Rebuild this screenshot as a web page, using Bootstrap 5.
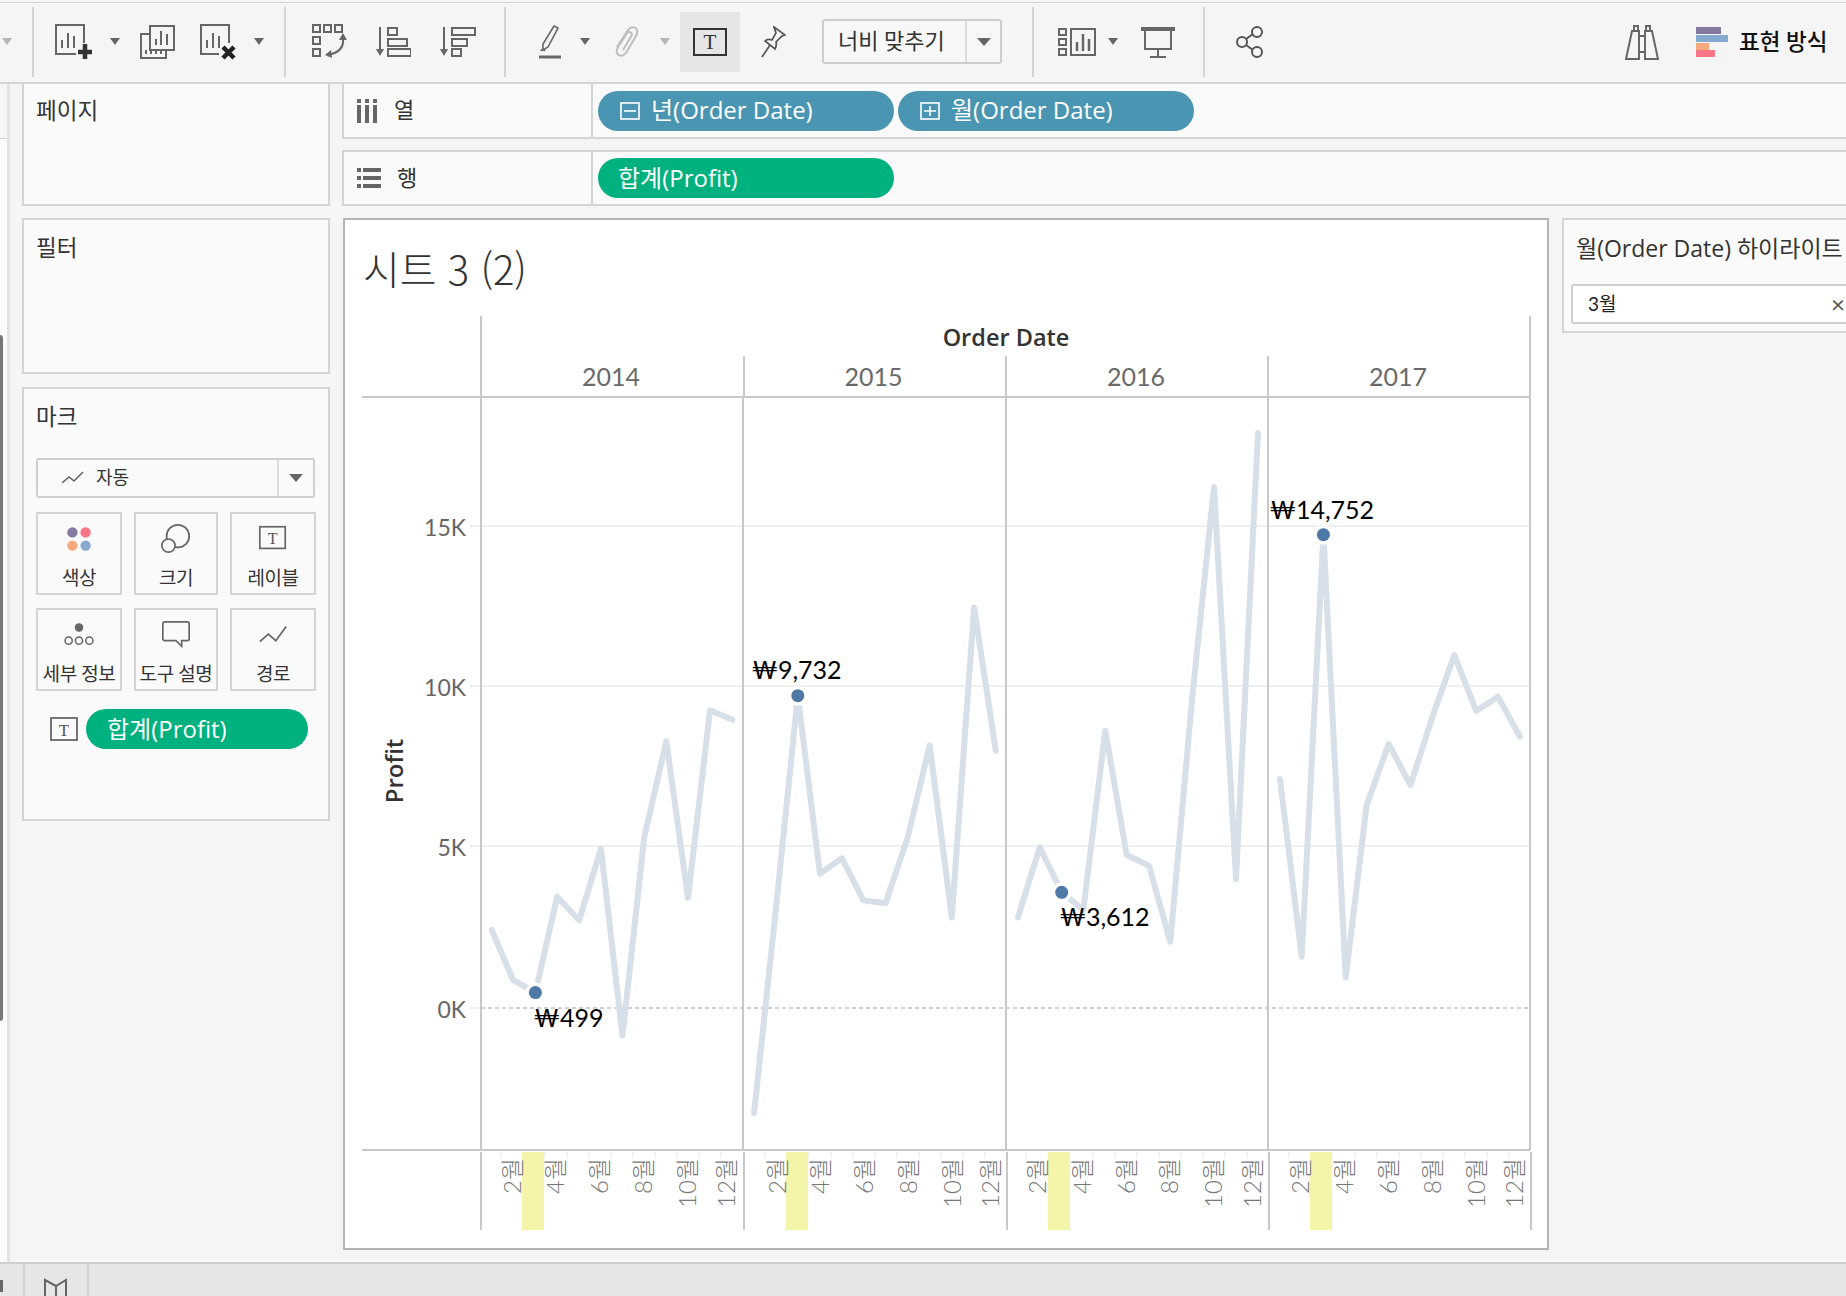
<!doctype html>
<html lang="ko">
<head>
<meta charset="utf-8">
<title>시트 3 (2)</title>
<link href="https://cdn.jsdelivr.net/npm/bootstrap@5.3.0/dist/css/bootstrap.min.css" rel="stylesheet">
<style>
:root{--line:#d4d4d4;--ink:#333;--icon:#666}
html,body{height:100%}
body{width:1846px;height:1296px;overflow:hidden;background:#f5f5f5;color:var(--ink);font-family:Lato,"Noto Sans CJK KR",sans-serif;font-size:21px;line-height:1.2}
.page-top{height:3px;border-bottom:1px solid var(--line);margin-top:0}
.toolbar-strip{height:81px;border-bottom:2px solid var(--line);padding-bottom:2px}
.toolbar-strip svg{display:block;flex:none}
.tb-sep{width:2px;height:70px;background:#d4d4d4;flex:none}
.caret-dn{width:0;height:0;border-left:5px solid transparent;border-right:5px solid transparent;border-top:7px solid var(--icon);flex:none}
.caret-off{border-top-color:#b5b5b5}
.caret-lg{border-left-width:7px;border-right-width:7px;border-top-width:8px}
.s10{margin-left:10px}.s11{margin-left:11px}.s12{margin-left:12px}.s18{margin-left:18px}.s19{margin-left:19px}.s20{margin-left:20px}.s21{margin-left:21px}.s23{margin-left:23px}.s24{margin-left:24px}.s25{margin-left:25px}.s26{margin-left:26px}.s28{margin-left:28px}.s29{margin-left:29px}.s30{margin-left:30px}.s31{margin-left:31px}.s33{margin-left:33px}.s36{margin-left:36px}.s37{margin-left:37px}.s2{margin-left:2px}.s361{margin-left:361px}
.t-active{width:60px;height:60px;background:#e6e6e6;flex:none}
.fit-select{width:180px;height:45px;border:2px solid #cdcdcd;border-radius:3px;flex:none;background:#f7f7f7}
.fit-label{width:141px;padding-left:14px;font-size:22px;color:#333;white-space:nowrap}
.fit-arrow{flex:1;height:100%;border-left:2px solid #dcdcdc}
.showme-text{font-size:22.500px;color:#111;white-space:nowrap;font-weight:500}
.work-row{height:1178px}
.left-strip{width:10px;flex:none;border-right:3px solid #e3e3e3;background:#fbfbfb}
.strip-head{height:55px;border-bottom:1px solid var(--line);background:#f6f6f6}
.strip-thumb{width:3px;height:686px;margin-top:196px;background:#777;border-radius:0 3px 3px 0}
.side-col{width:308px;margin-left:12px;flex:none}
.side-box{background:#fafafa;border:2px solid var(--line);padding:16px 12px 0 12px}
.box-pages{height:122px;border-top:0;padding-top:15px;margin-bottom:12px}
.box-filter{height:156px;margin-bottom:13px}
.box-marks{height:434px}
.box-label{font-size:22.500px;line-height:24px;color:#333}
.mark-select{height:40px;width:279px;margin-top:29px;border:2px solid #cfcfcf;border-radius:3px}
.mark-main{width:241px;padding-left:24px;font-size:18px;border-right:2px solid #dcdcdc;height:100%;gap:12px}
.mark-arrow{flex:1}
.mark-grid{display:grid;grid-template-columns:86px 84px 86px;column-gap:12px;row-gap:13px;width:280px;margin-top:14px}
.mark-tile{height:83px;border:2px solid var(--line);padding-top:9px;font-size:19px;line-height:22px;color:#333;white-space:nowrap;letter-spacing:-.4px}
.mark-tile svg{height:32px;width:32px;display:block;margin-bottom:12px}
.pill-line{margin-top:18px;margin-left:14px;gap:8px}
.data-pill{height:40px;border-radius:20px;color:#fff;font-family:"Open Sans","Noto Sans CJK KR",sans-serif;font-size:24px;white-space:nowrap;width:296px;flex:none}
.pill-blue{background:#4a96b2}
.pill-green{background:#00b180}
.pill-short{width:222px;padding-left:21px}
.main-col{margin-left:12px;width:1504px;flex:none}
.shelf-row{height:55px;background:#fafafa;border-left:2px solid var(--line);border-bottom:2px solid var(--line);width:1504px}
.shelf-row+.shelf-row{border-top:2px solid var(--line);margin-top:11px;height:56px}
.shelf-name{width:249px;height:100%;border-right:2px solid var(--line);padding-left:13px;gap:16px;font-size:22px;flex:none}
.shelf-pills{padding-left:5px;gap:4px}
.shelf-pills .data-pill{gap:11px;padding-left:22px}
.shelf-pills .pill-tall{padding-left:20px}
.view-row{margin-top:12px;gap:13px;margin-left:1px}
.view-card{width:1206px;height:1032px;background:#fff;border:2px solid #b4b4b4;flex:none}
.view-title{height:90px;padding:25px 0 0 18px;font-size:40px;font-weight:300;line-height:46px;color:#333;font-family:"Noto Sans CJK KR",sans-serif}
.view-card svg{display:block}
.ax-txt{font-family:Lato,"Noto Sans CJK KR",sans-serif}
.ax-num{font-size:23px;fill:#666}
.ax-head{font-size:23.500px;fill:#333;font-weight:600;font-family:"Open Sans","Noto Sans CJK KR",sans-serif}
.ax-vert{font-size:24px}
.ax-year{font-size:25px;fill:#6a6a6a}
.ax-month{font-size:24px;fill:#777;font-weight:300}
.val-lab{font-size:25px;fill:#000}
.hl-panel{width:400px;height:115px;background:#fafafa;border:2px solid var(--line);padding:14px 0 0 12px;flex:none}
.hl-title{font-family:"Open Sans","Noto Sans CJK KR",sans-serif;font-size:23px;line-height:28px;white-space:nowrap;color:#333}
.hl-input{height:40px;width:290px;margin-top:22px;margin-left:-5px;background:#fff;border:2px solid #cfcfcf;border-radius:3px;padding-left:15px;font-size:19px;color:#222;justify-content:space-between}
.hl-x{margin-right:14px;color:#555;font-size:24px;line-height:1}
.bottom-bar{height:34px;background:#e6e6e6;border-top:2px solid #cfcfcf}
.tab-cell{height:100%;border-right:2px solid #d2d2d2;flex:none}
.tab-a{width:25px;padding-top:16px}
.tab-a svg{display:block}
.tab-b{width:64px}
.tab-b svg{margin:14px 0 0 19px;display:block}
</style>
</head>
<body>
<div class="page-top"></div>

<div class="toolbar-strip d-flex align-items-center">
  <span class="caret-dn caret-off s2"></span>
  <span class="tb-sep s20"></span>
  <svg class="s21" width="37" height="36" viewBox="0 0 37 36" fill="none" stroke="#666"><path stroke-width="2" d="M29 19V1H1v29h20"/><path stroke-width="2" d="M7 24v-8M13 24V9M19 24V12"/><path stroke="#333" stroke-width="4.500" d="M30 20v15M23 28h14"/></svg>
  <span class="caret-dn s18"></span>
  <svg class="s20" width="35" height="34" viewBox="0 0 35 34" fill="none" stroke="#666" stroke-width="2"><rect x="10" y="1" width="24" height="24"/><path d="M16 20v-6M21 20V6M27 20V9"/><path d="M10 9H1v24h25v-8"/><path d="M6 29v-4M11 29v-4M16 29v-4M21 29v-4"/></svg>
  <svg class="s25" width="36" height="36" viewBox="0 0 36 36" fill="none" stroke="#666" stroke-width="2"><path d="M29 19V1H1v29h18"/><path d="M7 24v-8M13 24V9M19 24V12"/><path stroke="#222" stroke-width="4.500" d="M23 23l11 11M34 23L23 34"/></svg>
  <span class="caret-dn s18"></span>
  <span class="tb-sep s20"></span>
  <svg class="s26" width="35" height="36" viewBox="0 0 35 36" fill="none" stroke="#666" stroke-width="2"><rect x="1" y="1" width="7" height="7"/><rect x="12" y="1" width="7" height="7"/><rect x="23" y="1" width="7" height="7"/><rect x="1" y="13" width="7" height="7"/><rect x="1" y="25" width="7" height="7"/><path d="M31 14c1 9-4 15-15 17"/><path fill="#666" stroke="none" d="M27 16l4-7 4 7zM13 31l6-5 1 8z"/></svg>
  <svg class="s29" width="35" height="30" viewBox="0 0 35 30" fill="none" stroke="#666" stroke-width="2"><path d="M4 0v24"/><path fill="#666" stroke="none" d="M0 22h8l-4 7z"/><rect x="12" y="1" width="9" height="7"/><rect x="12" y="12" width="19" height="7"/><rect x="12" y="22" width="23" height="7"/></svg>
  <svg class="s29" width="36" height="30" viewBox="0 0 36 30" fill="none" stroke="#666" stroke-width="2"><path d="M4 0v24"/><path fill="#666" stroke="none" d="M0 22h8l-4 7z"/><rect x="12" y="1" width="23" height="7"/><rect x="12" y="12" width="15" height="7"/><rect x="12" y="22" width="9" height="7"/></svg>
  <span class="tb-sep s28"></span>
  <svg class="s33" width="22" height="34" viewBox="0 0 22 34" fill="none" stroke="#666" stroke-width="1.600"><path d="M15 1l4 2-10 19-5 3 0-6z"/><path d="M2 26l1-2M6 26l-1-1"/><path stroke-width="3" d="M0 32h22"/></svg>
  <span class="caret-dn s19"></span>
  <svg class="s25" width="24" height="32" viewBox="0 0 24 32" fill="none" stroke="#bdbdbd" stroke-width="2"><path d="M2 21L13 4c3-4 8-3 9 0 1 2 0 4-1 6L11 27c-3 4-8 3-9 0-1-2 0-4 1-6l9-14c2-2 5-1 5 2l-9 15"/></svg>
  <span class="caret-dn caret-off s21"></span>
  <div class="t-active s10 d-flex align-items-center justify-content-center">
    <svg width="34" height="28" viewBox="0 0 34 28" fill="none"><rect x="1" y="1" width="32" height="26" stroke="#333" stroke-width="2"/><text x="17" y="21" text-anchor="middle" font-family="Liberation Serif" font-size="21" fill="#333">T</text></svg>
  </div>
  <svg class="s20" width="26" height="32" viewBox="0 0 26 32" fill="none" stroke="#555" stroke-width="1.700"><path d="M14 1l11 8-3 1-6 6c1 3 0 5-1 7L5 15c2-2 4-2 7-1l4-7z"/><path d="M10 19L2 31"/></svg>
  <div class="fit-select s36 d-flex align-items-center">
    <span class="fit-label">너비 맞추기</span>
    <span class="fit-arrow d-flex align-items-center justify-content-center"><span class="caret-dn caret-lg"></span></span>
  </div>
  <span class="tb-sep s30"></span>
  <svg class="s24" width="38" height="28" viewBox="0 0 38 28" fill="none" stroke="#666" stroke-width="2"><rect x="1" y="1" width="7" height="6"/><rect x="1" y="11" width="7" height="6"/><rect x="1" y="21" width="7" height="6"/><rect x="13" y="1" width="24" height="26"/><path stroke-width="2.500" d="M19 23v-9M25 23V6M31 23V11"/></svg>
  <span class="caret-dn s12"></span>
  <svg class="s23" width="34" height="32" viewBox="0 0 34 32" fill="none" stroke="#666" stroke-width="2"><path stroke-width="4" d="M0 3h34"/><path d="M4 4v19h26V4M17 23v7M9 31h16"/></svg>
  <span class="tb-sep s28"></span>
  <svg class="s31" width="28" height="32" viewBox="0 0 28 32" fill="none" stroke="#555" stroke-width="2"><circle cx="6" cy="16" r="5"/><circle cx="21" cy="6" r="5"/><circle cx="21" cy="26" r="5"/><path d="M10 13l7-5M10 19l7 5"/></svg>
  <svg class="s361" width="34" height="36" viewBox="0 0 34 36" fill="none" stroke="#666" stroke-width="2"><path d="M9 7V2h4v5M21 7V2h4v5M7 7h7v28H1zM20 7h7l6 28H20zM14 12h6M14 28h6"/></svg>
  <svg class="s37" width="32" height="30" viewBox="0 0 32 30"><rect width="25" height="7" fill="#867aa0"/><rect y="8" width="32" height="7" fill="#86a9d0"/><rect y="16" width="13" height="7" fill="#f4a97e"/><rect y="23" width="19" height="7" fill="#f87487"/></svg>
  <span class="showme-text s11">표현 방식</span>
</div>

<div class="work-row d-flex">
  <div class="left-strip d-flex flex-column">
    <div class="strip-head"></div>
    <div class="strip-thumb"></div>
  </div>

  <div class="side-col">
    <div class="side-box box-pages"><div class="box-label">페이지</div></div>
    <div class="side-box box-filter"><div class="box-label">필터</div></div>
    <div class="side-box box-marks">
      <div class="box-label">마크</div>
      <div class="mark-select d-flex align-items-center">
        <div class="mark-main d-flex align-items-center">
          <svg width="22" height="14" viewBox="0 0 22 14" fill="none" stroke="#666" stroke-width="1.600"><path d="M0 12l7-6 5 4 9-9"/></svg>
          <span>자동</span>
        </div>
        <div class="mark-arrow d-flex justify-content-center"><span class="caret-dn caret-lg"></span></div>
      </div>
      <div class="mark-grid">
        <div class="mark-tile d-flex flex-column align-items-center">
          <svg viewBox="0 0 34 34"><circle cx="10" cy="10" r="5.500" fill="#867aa0"/><circle cx="24" cy="10" r="5.500" fill="#f87487"/><circle cx="10" cy="24" r="5.500" fill="#f4a97e"/><circle cx="24" cy="24" r="5.500" fill="#86a9d0"/></svg>
          <span>색상</span>
        </div>
        <div class="mark-tile d-flex flex-column align-items-center">
          <svg viewBox="0 0 34 34" fill="none" stroke="#666" stroke-width="1.800"><circle cx="19" cy="14" r="12"/><circle cx="9" cy="24" r="7" fill="#fafafa"/></svg>
          <span>크기</span>
        </div>
        <div class="mark-tile d-flex flex-column align-items-center">
          <svg viewBox="0 0 34 34" fill="none"><rect x="3" y="4" width="27" height="23" stroke="#666" stroke-width="1.800"/><text x="16.500" y="22" text-anchor="middle" font-family="Liberation Serif" font-size="17" fill="#555">T</text></svg>
          <span>레이블</span>
        </div>
        <div class="mark-tile d-flex flex-column align-items-center">
          <svg viewBox="0 0 34 34" fill="none" stroke="#666" stroke-width="1.600"><circle cx="17" cy="9" r="4.500" fill="#666" stroke="none"/><circle cx="6" cy="23" r="3.800"/><circle cx="17" cy="23" r="3.800"/><circle cx="28" cy="23" r="3.800"/></svg>
          <span>세부 정보</span>
        </div>
        <div class="mark-tile d-flex flex-column align-items-center">
          <svg viewBox="0 0 34 34" fill="none" stroke="#666" stroke-width="1.800"><path d="M5 3h24a2 2 0 0 1 2 2v16a2 2 0 0 1-2 2h-6v6l-6-6H5a2 2 0 0 1-2-2V5a2 2 0 0 1 2-2z"/></svg>
          <span>도구 설명</span>
        </div>
        <div class="mark-tile d-flex flex-column align-items-center">
          <svg viewBox="0 0 34 34" fill="none" stroke="#666" stroke-width="1.800"><path d="M3 24l9-8 8 7L31 8"/></svg>
          <span>경로</span>
        </div>
      </div>
      <div class="pill-line d-flex align-items-center">
        <svg width="28" height="24" viewBox="0 0 28 24" fill="none"><rect x="1" y="1" width="26" height="22" stroke="#666" stroke-width="1.800"/><text x="14" y="18.500" text-anchor="middle" font-family="Liberation Serif" font-size="17" fill="#555">T</text></svg>
        <div class="data-pill pill-green pill-short d-flex align-items-center">합계(Profit)</div>
      </div>
    </div>
  </div>

  <div class="main-col">
    <div class="shelf-row d-flex">
      <div class="shelf-name d-flex align-items-center">
        <svg width="21" height="24" viewBox="0 0 21 24" fill="#666"><rect width="4" height="4"/><rect y="6" width="4" height="18"/><rect x="8" width="4" height="4"/><rect x="8" y="6" width="4" height="18"/><rect x="16" width="4" height="4"/><rect x="16" y="6" width="4" height="18"/></svg>
        <span>열</span>
      </div>
      <div class="shelf-pills d-flex align-items-center">
        <div class="data-pill pill-blue d-flex align-items-center">
          <svg width="20" height="18" viewBox="0 0 20 18" fill="none" stroke="#fff" stroke-width="1.600"><rect x="1" y="1" width="18" height="16"/><path d="M4 9h12"/></svg>
          <span>년(Order Date)</span>
        </div>
        <div class="data-pill pill-blue d-flex align-items-center">
          <svg width="20" height="18" viewBox="0 0 20 18" fill="none" stroke="#fff" stroke-width="1.600"><rect x="1" y="1" width="18" height="16"/><path d="M4 9h12M10 4v10"/></svg>
          <span>월(Order Date)</span>
        </div>
      </div>
    </div>
    <div class="shelf-row d-flex">
      <div class="shelf-name d-flex align-items-center">
        <svg width="24" height="20" viewBox="0 0 24 20" fill="#666"><rect y="0" width="4" height="4"/><rect x="6" y="0" width="18" height="4"/><rect y="8" width="4" height="4"/><rect x="6" y="8" width="18" height="4"/><rect y="16" width="4" height="4"/><rect x="6" y="16" width="18" height="4"/></svg>
        <span>행</span>
      </div>
      <div class="shelf-pills d-flex align-items-center">
        <div class="data-pill pill-green pill-tall d-flex align-items-center">합계(Profit)</div>
      </div>
    </div>

    <div class="view-row d-flex">
      <div class="view-card">
        <div class="view-title">시트 3 (2)</div>
        <svg width="1202" height="938" viewBox="345 310 1202 938" role="img" aria-label="Profit line chart">
          <g stroke="#f5f5aa" stroke-width="22" fill="none"><path d="M533 1152v78M797 1152v78M1059 1152v78M1321 1152v78"/></g>
          <path stroke="#f0f0f0" stroke-width="2" fill="none" d="M470 526H1530M470 686H1530M470 846H1530M470 1008H481"/>
          <path stroke="#c0c0c0" stroke-width="1.500" stroke-dasharray="4 3" fill="none" d="M481 1008H1530"/>
          <path stroke="#efefef" stroke-width="1.500" fill="none" d="M501 1152v6M545 1152v6M567 1152v6M589 1152v6M611 1152v6M633 1152v6M655 1152v6M677 1152v6M699 1152v6M721 1152v6M765 1152v6M809 1152v6M831 1152v6M853 1152v6M875 1152v6M897 1152v6M919 1152v6M941 1152v6M963 1152v6M985 1152v6M1026 1152v6M1093 1152v6M1115 1152v6M1137 1152v6M1159 1152v6M1181 1152v6M1203 1152v6M1225 1152v6M1247 1152v6M1289 1152v6M1355 1152v6M1377 1152v6M1399 1152v6M1421 1152v6M1443 1152v6M1465 1152v6M1487 1152v6M1509 1152v6"/>
          <path stroke="#c8c8c8" stroke-width="2" fill="none" d="M362 397H1530M362 1150H1530M743 397V1150M1006 397V1150M1268 397V1150M1530 397V1150M481 316V1150M744 356V397M1006 356V397M1268 356V397M1530 316V397M481 1152V1230M744 1152V1230M1007 1152V1230M1269 1152V1230M1531 1152V1230"/>
          <g fill="none" stroke="#d7e0e8" stroke-width="6" stroke-linejoin="round" stroke-linecap="round">
            <polyline points="491.700,929.900 513,979.800 535.400,992.600 557.100,896.800 579.200,920.200 600.900,848.600 622.500,1035.600 644.200,837.600 666.300,741.200 688,897.900 710,710.200 732.400,719.800"/>
            <polyline points="754.100,1113 775.800,910 797.800,695.700 819.900,873.800 841.900,858.300 863.600,900.600 885.600,903 907.700,837.600 929.700,745.300 951.800,917.500 974.100,607.600 995.800,750.800"/>
            <polyline points="1018,917.300 1039.700,847.300 1061.700,892.300 1083.300,910 1105.300,730.700 1126.700,855 1149,865.700 1170.300,941.700 1192,700 1214,487 1236,879 1258,433"/>
            <polyline points="1280,779 1301.700,956.700 1323.400,534.700 1345.700,977.300 1366.700,805 1388.600,744 1410.500,785 1432.400,717 1454.300,655 1476.200,711 1498,696.700 1520,736.700"/>
          </g>
          <g fill="#fff"><circle cx="535.400" cy="992.600" r="10"/><circle cx="797.800" cy="695.700" r="10"/><circle cx="1061.700" cy="892.300" r="10"/><circle cx="1323.400" cy="534.700" r="10"/></g>
          <g fill="#4e79a7"><circle cx="535.400" cy="992.600" r="6.500"/><circle cx="797.800" cy="695.700" r="6.500"/><circle cx="1061.700" cy="892.300" r="6.500"/><circle cx="1323.400" cy="534.700" r="6.500"/></g>
          <g class="ax-txt val-lab" dominant-baseline="central">
            <text x="533.500" y="1017">₩499</text><text x="751.500" y="668.500">₩9,732</text><text x="1059.500" y="916">₩3,612</text><text x="1269.500" y="508.500">₩14,752</text>
          </g>
          <g class="ax-txt ax-num" text-anchor="end" dominant-baseline="central">
            <text x="466" y="527">15K</text><text x="466" y="687">10K</text><text x="466" y="847">5K</text><text x="466" y="1009">0K</text>
          </g>
          <text class="ax-head" x="1006" y="337" text-anchor="middle" dominant-baseline="central">Order Date</text>
          <text class="ax-head ax-vert" transform="translate(393 771) rotate(-90)" text-anchor="middle" dominant-baseline="central">Profit</text>
          <g class="ax-txt ax-year" text-anchor="middle" dominant-baseline="central">
            <text x="611" y="376">2014</text><text x="873.500" y="376">2015</text><text x="1136" y="376">2016</text><text x="1398" y="376">2017</text>
          </g>
          <g class="ax-txt ax-month" text-anchor="end" dominant-baseline="central">
            <text transform="translate(511 1158) rotate(-90)">2월</text><text transform="translate(554 1158) rotate(-90)">4월</text><text transform="translate(598 1158) rotate(-90)">6월</text><text transform="translate(642.500 1158) rotate(-90)">8월</text><text transform="translate(686 1158) rotate(-90)">10월</text><text transform="translate(725 1158) rotate(-90)">12월</text>
            <text transform="translate(776 1158) rotate(-90)">2월</text><text transform="translate(819 1158) rotate(-90)">4월</text><text transform="translate(863 1158) rotate(-90)">6월</text><text transform="translate(907.600 1158) rotate(-90)">8월</text><text transform="translate(951 1158) rotate(-90)">10월</text><text transform="translate(989 1158) rotate(-90)">12월</text>
            <text transform="translate(1036 1158) rotate(-90)">2월</text><text transform="translate(1081 1158) rotate(-90)">4월</text><text transform="translate(1125 1158) rotate(-90)">6월</text><text transform="translate(1168.500 1158) rotate(-90)">8월</text><text transform="translate(1212 1158) rotate(-90)">10월</text><text transform="translate(1251 1158) rotate(-90)">12월</text>
            <text transform="translate(1299 1158) rotate(-90)">2월</text><text transform="translate(1343 1158) rotate(-90)">4월</text><text transform="translate(1387 1158) rotate(-90)">6월</text><text transform="translate(1431 1158) rotate(-90)">8월</text><text transform="translate(1475 1158) rotate(-90)">10월</text><text transform="translate(1513 1158) rotate(-90)">12월</text>
          </g>
        </svg>
      </div>
      <div class="hl-panel">
        <div class="hl-title">월(Order Date) 하이라이트</div>
        <div class="hl-input d-flex align-items-center"><span>3월</span><span class="hl-x">×</span></div>
      </div>
    </div>
  </div>
</div>

<div class="bottom-bar d-flex">
  <div class="tab-cell tab-a"><svg width="4" height="16" viewBox="0 0 4 16" fill="#666"><rect width="3" height="12"/></svg></div>
  <div class="tab-cell tab-b">
    <svg width="24" height="20" viewBox="0 0 24 20" fill="none" stroke="#666" stroke-width="2"><path d="M1 20V2l11 6 10-6v18M12 8v12"/></svg>
  </div>
</div>
<script src="https://cdn.jsdelivr.net/npm/bootstrap@5.3.0/dist/js/bootstrap.bundle.min.js"></script>
</body>
</html>
